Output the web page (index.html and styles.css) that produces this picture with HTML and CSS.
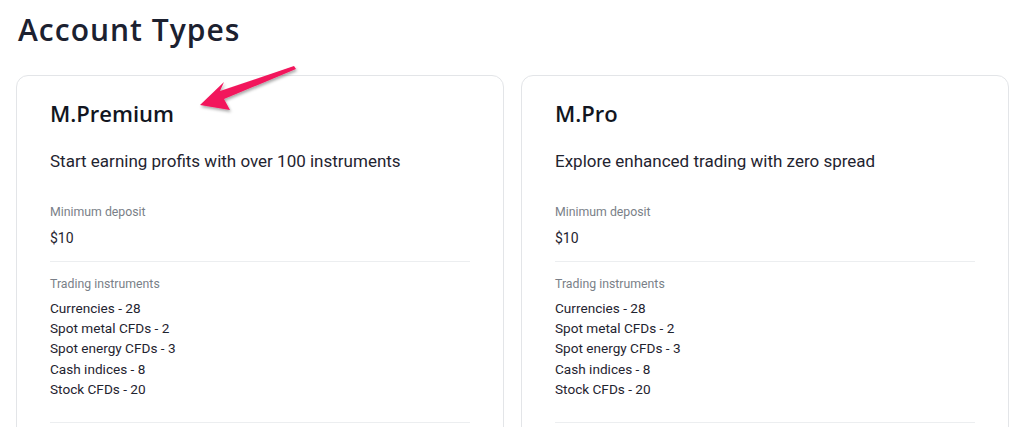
FILE: index.html
```html
<!DOCTYPE html>
<html lang="en">
<head>
  <meta name="viewport" content="width=device-width, initial-scale=1.0">
  <title>Account Types</title>
  <link rel="stylesheet" href="styles.css">
</head>
<body>
  <h1 class="page-title">Account Types</h1>

  <div class="cards">
    <div class="card">
      <h2 class="card-title">M.Premium</h2>
      <p class="card-lead">Start earning profits with over 100 instruments</p>
      <div class="card-section">
        <div class="label">Minimum deposit</div>
        <div class="value">$10</div>
      </div>
      <div class="card-section">
        <div class="label">Trading instruments</div>
        <ul class="list">
          <li>Currencies - 28</li>
          <li>Spot metal CFDs - 2</li>
          <li>Spot energy CFDs - 3</li>
          <li>Cash indices - 8</li>
          <li>Stock CFDs - 20</li>
        </ul>
      </div>
      <div class="card-section"></div>
    </div>

    <div class="card">
      <h2 class="card-title">M.Pro</h2>
      <p class="card-lead">Explore enhanced trading with zero spread</p>
      <div class="card-section">
        <div class="label">Minimum deposit</div>
        <div class="value">$10</div>
      </div>
      <div class="card-section">
        <div class="label">Trading instruments</div>
        <ul class="list">
          <li>Currencies - 28</li>
          <li>Spot metal CFDs - 2</li>
          <li>Spot energy CFDs - 3</li>
          <li>Cash indices - 8</li>
          <li>Stock CFDs - 20</li>
        </ul>
      </div>
      <div class="card-section"></div>
    </div>
  </div>

  <!-- annotation arrow -->
  <svg class="arrow" width="120" height="60" viewBox="0 0 120 60">
    <defs>
      <filter id="shadow" x="-20%" y="-40%" width="140%" height="180%">
        <feDropShadow dx="1" dy="2" stdDeviation="1.5" flood-color="#000" flood-opacity="0.35"/>
      </filter>
    </defs>
    <path d="M112 6 L110 3 L36 28 L40 19 L16 42 L46 47 L40 36 Z" fill="#f2155c" filter="url(#shadow)"/>
  </svg>
</body>
</html>
```

FILE: styles.css
```css
body {
  margin: 0;
  background: #fff;
  color: #1f2430;
  font-family: Roboto, "Liberation Sans", sans-serif;
  position: relative;
}

.page-title {
  margin: 0;
  padding: 12px 0 0 18px;
  font-family: "Open Sans", sans-serif;
  font-weight: 600;
  font-size: 30px;
  line-height: 36px;
  color: #1c2130;
  letter-spacing: 1px;
}

.cards {
  display: grid;
  grid-template-columns: 488px 488px;
  gap: 17px;
  padding: 27px 0 0 16px;
}

.card {
  border: 1px solid #e3e5e8;
  border-radius: 12px;
  padding: 22px 33px 40px 33px;
  height: 400px;
}

.card-title {
  margin: 0;
  font-family: "Open Sans", sans-serif;
  font-weight: 600;
  font-size: 22px;
  line-height: 30px;
  color: #12161f;
}

.card-lead {
  margin: 22px 0 0;
  font-size: 17px;
  line-height: 22px;
  color: #1f2430;
}

.card-section {
  border-top: 1px solid #eceef0;
  padding: 14px 0 13px;
}

.card-section:first-of-type {
  border-top: none;
  padding-top: 32px;
}

.label {
  font-size: 12.3px;
  line-height: 16px;
  color: #7a7f88;
}

.value {
  margin-top: 8px;
  font-size: 14px;
  line-height: 20px;
}

.list {
  list-style: none;
  margin: 6px 0 0;
  padding: 0 0 10px;
  font-size: 13.6px;
  line-height: 20.2px;
}

.arrow {
  position: absolute;
  left: 184px;
  top: 63px;
}
```
